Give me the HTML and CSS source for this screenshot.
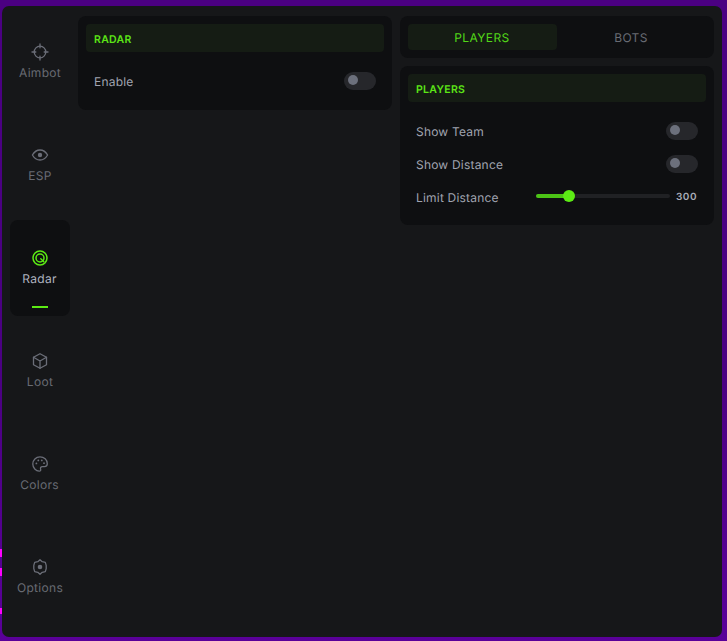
FILE: index.html
```html
<!DOCTYPE html>
<html lang="en">
<head>
<meta charset="utf-8">
<title>Radar</title>
<link rel="stylesheet" href="styles.css">
</head>
<body>
<div class="frame">
  <span class="mark mark-a"></span>
  <span class="mark mark-b"></span>
  <span class="mark mark-c"></span>
  <div class="app">
    <nav class="sidebar">
      <div class="nav-item">
        <svg class="icon" viewBox="0 0 16 16"><circle cx="8" cy="8" r="5.800"/><path d="M8 0v3.800M8 12.200V16M0 8h3.800M12.200 8H16"/></svg>
        <span class="nav-label">Aimbot</span>
      </div>
      <div class="nav-item">
        <svg class="icon" viewBox="0 0 16 16"><path d="M.4 8C2.300 4.700 4.900 3 8 3S13.700 4.700 15.600 8C13.700 11.300 11.100 13 8 13S2.300 11.300.4 8Z"/><circle class="dot" cx="8" cy="8" r="2.200"/></svg>
        <span class="nav-label">ESP</span>
      </div>
      <div class="nav-item active">
        <svg class="icon" viewBox="0 0 16 16"><circle cx="8" cy="8" r="7"/><circle cx="8" cy="8" r="4"/><path d="M8.800 8.800l3 3"/></svg>
        <span class="nav-label">Radar</span>
        <span class="indicator"></span>
      </div>
      <div class="nav-item">
        <svg class="icon" viewBox="0 0 16 16"><path d="M8 .7l6.500 3.600v7.400L8 15.300l-6.500-3.600V4.300Z"/><path d="M1.500 4.300 8 8l6.500-3.700M8 8v7.300"/></svg>
        <span class="nav-label">Loot</span>
      </div>
      <div class="nav-item">
        <svg class="icon" viewBox="0 0 16 16"><path d="M8 .9C3.900.9.800 4 .8 8c0 3.900 3.100 7.100 6.500 7.100 1.300 0 1.700-.9 1.300-2-.5-1.400.3-2.500 1.700-2.500h2.300c1.700 0 2.700-1.100 2.700-2.800C15.300 3.800 12 .9 8 .9Z"/><circle class="dot" cx="4.400" cy="7.400" r=".9"/><circle class="dot" cx="6.300" cy="4.400" r=".9"/><circle class="dot" cx="9.800" cy="4.400" r=".9"/><circle class="dot" cx="12" cy="7.200" r=".9"/></svg>
        <span class="nav-label nav-label-shift">Colors</span>
      </div>
      <div class="nav-item">
        <svg class="icon" viewBox="0 0 16 16"><path d="M8 .7l2.200 2 3.100.7.900 3v3.200l-.9 3-3.100.7-2.200 2-2.200-2-3.100-.7-.9-3V6.400l.9-3 3.100-.7Z"/><circle class="dot" cx="8" cy="8" r="2.300"/></svg>
        <span class="nav-label">Options</span>
      </div>
    </nav>
    <main class="content">
      <div class="column">
        <section class="panel">
          <h2 class="panel-title">RADAR</h2>
          <div class="rows rows-single">
            <div class="row">
              <span class="row-label">Enable</span>
              <span class="toggle"><span class="knob"></span></span>
            </div>
          </div>
        </section>
      </div>
      <div class="column">
        <div class="panel tabs">
          <div class="tab tab-active">PLAYERS</div>
          <div class="tab">BOTS</div>
        </div>
        <section class="panel">
          <h2 class="panel-title">PLAYERS</h2>
          <div class="rows">
            <div class="row">
              <span class="row-label">Show Team</span>
              <span class="toggle"><span class="knob"></span></span>
            </div>
            <div class="row">
              <span class="row-label">Show Distance</span>
              <span class="toggle"><span class="knob"></span></span>
            </div>
            <div class="row">
              <span class="row-label">Limit Distance</span>
              <div class="slider">
                <div class="track"><div class="fill"></div><span class="thumb"></span></div>
                <span class="value">300</span>
              </div>
            </div>
          </div>
        </section>
      </div>
    </main>
  </div>
</div>
</body>
</html>
```

FILE: styles.css
```css
* { box-sizing: border-box; }
html, body { margin: 0; height: 100%; overflow: hidden; }
body {
  background: #4b0082;
  font-family: Inter, "Liberation Sans", sans-serif;
  text-rendering: geometricPrecision;
}

.frame {
  position: relative;
  height: 641px;
  padding: 6px 5px 4px 2px;
  background: linear-gradient(#4b0082 0, #4b0082 60%, #5a0099 100%);
}
.mark { position: absolute; left: 0; width: 2px; background: #ff00ff; }
.mark-a { top: 549px; height: 8px; }
.mark-b { top: 568px; height: 8px; }
.mark-c { top: 608px; height: 6px; }

.app {
  display: flex;
  gap: 8px;
  height: 631px;
  padding: 8px 8px 0;
  background: #161719;
  border-radius: 7px;
}

.sidebar { display: flex; flex-direction: column; gap: 7px; width: 60px; }
.nav-item {
  display: flex;
  flex-direction: column;
  align-items: center;
  height: 96px;
  padding: 30px 0 8px;
  border-radius: 8px;
  color: #686b73;
}
.nav-item.active { background: #0e0f11; color: #b0b4c0; }
.icon {
  width: 16px;
  height: 16px;
  overflow: visible;
  fill: none;
  stroke: #6b6e78;
  stroke-width: 1.3;
  stroke-linejoin: round;
  stroke-linecap: round;
}
.icon .dot { fill: #6b6e78; stroke: none; }
.active .icon { stroke: #5ceb14; stroke-width: 1.5; }
.nav-label { margin-top: 5px; font-size: 12px; line-height: 16px; letter-spacing: .3px; }
.active .nav-label, .nav-label-shift { padding-right: 1px; }
.indicator { width: 16px; height: 2px; margin-top: auto; background: #5ceb14; }

.content { flex: 1; display: grid; grid-template-columns: 314px 314px; gap: 8px; padding-top: 2px; align-items: start; }
.column { display: flex; flex-direction: column; gap: 8px; }

.panel { padding: 8px; background: #0e0f11; border-radius: 8px; }
.panel-title {
  display: flex;
  align-items: center;
  height: 28px;
  margin: 0;
  padding: 2px 8px 0;
  background: #151c14;
  border-radius: 4px;
  color: #5ce616;
  font-size: 10.500px;
  font-weight: 600;
  letter-spacing: .3px;
}

.tabs { display: grid; grid-template-columns: 1fr 1fr; }
.tab {
  height: 26px;
  padding-right: 1px;
  color: #686b73;
  font-size: 12px;
  line-height: 27px;
  text-align: center;
  letter-spacing: .4px;
  border-radius: 4px;
}
.tab-active { background: #151c14; color: #52d817; }

.rows { display: flex; flex-direction: column; gap: 15px; padding: 20px 0 11px; }
.rows-single { padding: 20px 0 12px; }
.row { display: flex; align-items: center; justify-content: space-between; height: 18px; padding: 0 8px; }
.row-label { color: #a0a4b0; font-size: 12px; letter-spacing: .2px; }

.toggle { display: flex; align-items: center; width: 32px; height: 18px; margin-top: -1px; padding: 0 4px 1px; background: #26272b; border-radius: 9px; }
.knob { width: 10px; height: 10px; background: #6c707c; border-radius: 50%; }

.slider { display: flex; align-items: center; gap: 6px; margin-top: -2px; }
.track { position: relative; width: 134px; height: 4px; background: #202124; border-radius: 2px; }
.fill { width: 33px; height: 4px; background: #4cc416; border-radius: 2px; }
.thumb { position: absolute; left: 27px; top: -4px; width: 12px; height: 12px; background: #5ceb14; border-radius: 50%; }
.value { width: 22px; margin-top: 1px; color: #a9adb8; font-size: 10px; font-weight: 600; letter-spacing: .5px; }
```
